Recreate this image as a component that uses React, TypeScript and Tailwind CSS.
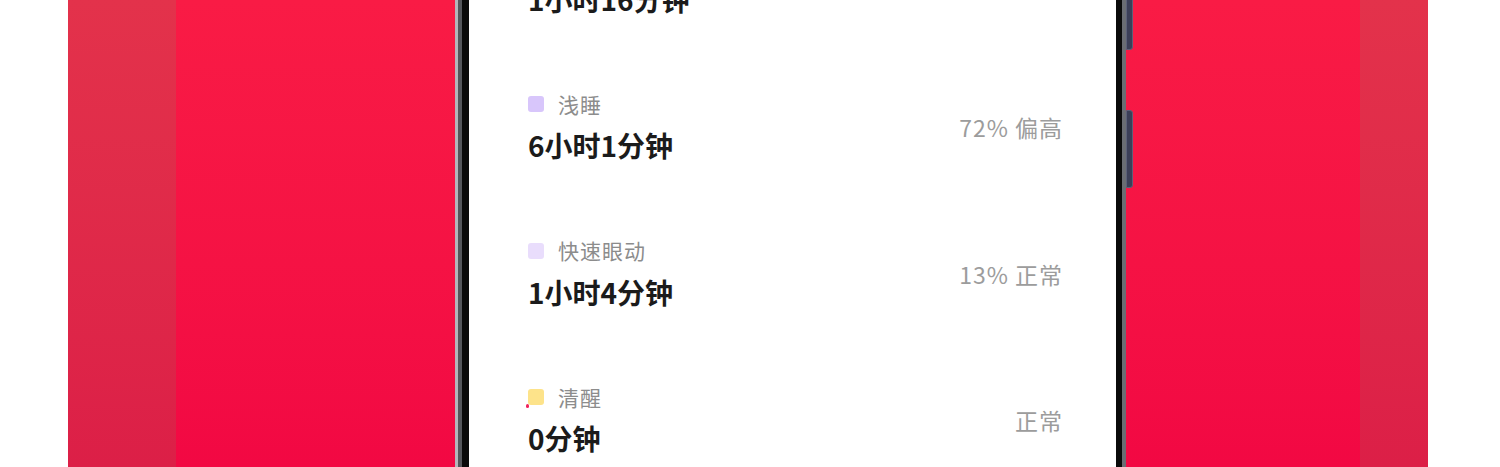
const FONT = { fontFamily: '"Noto Sans CJK SC", "Noto Sans", sans-serif' };

type Stage = {
  label: string;
  value: string;
  note: string;
  dot: string;
  mark?: boolean;
};

const stages: Stage[] = [
  { label: "深睡", value: "1小时16分钟", note: "", dot: "bg-[#b79cf5]" },
  { label: "浅睡", value: "6小时1分钟", note: "72% 偏高", dot: "bg-[#d8c6fb]" },
  { label: "快速眼动", value: "1小时4分钟", note: "13% 正常", dot: "bg-[#e9ddfc]" },
  { label: "清醒", value: "0分钟", note: "正常", dot: "bg-[#fde38a]", mark: true },
];

const StageRow = ({ s }: { s: Stage }) => {
  return (
    <div className="h-[146.5px] shrink-0">
      <div className="flex items-center justify-between">
        <div className="flex flex-col">
          <div className="flex h-[24px] items-center gap-[14px]">
            <div className={`relative h-[16px] w-[16px] rounded-[3px] ${s.dot}`}>
              {s.mark && (
                <div className="absolute -left-[2px] bottom-[-3px] h-[4px] w-[3px] rounded-full bg-[#f0245a]" />
              )}
            </div>
            <span className="text-[21px] leading-none tracking-[1px] text-[#8c8c8c]">{s.label}</span>
          </div>
          <span className="mt-[11px] h-[36px] text-[28px] font-bold leading-[36px] text-[#1b1b1b]">
            {s.value}
          </span>
        </div>
        <span className="text-[23px] leading-none tracking-[1px] text-[#9c9c9c]">{s.note}</span>
      </div>
    </div>
  );
};

const App = () => {
  return (
    <div className="flex h-[467px] w-[1500px] overflow-hidden bg-white" style={FONT}>
      <div className="w-[68px] shrink-0" />
      <div className="flex h-full w-[1360px] shrink-0">
        <div className="h-full w-[108px] shrink-0 bg-gradient-to-b from-[#e3324b] to-[#dc1f47]" />
        <div className="relative flex h-full w-[1184px] shrink-0 bg-gradient-to-b from-[#f91b45] to-[#f20843] pl-[279px]">
          {/* phone */}
          <div className="relative flex h-full w-[671px]">
            <div className="w-[3px] bg-[#b4b6bb]" />
            <div className="w-[4px] bg-[#55575c]" />
            <div className="w-[7px] bg-[#0a0a0a]" />
            <div className="flex h-full w-[647px] flex-col overflow-hidden bg-white pl-[59px] pr-[53px]">
              <div className="-mt-[54.5px] flex flex-col">
                {stages.map((s) => (
                  <StageRow key={s.label} s={s} />
                ))}
              </div>
            </div>
            <div className="w-[6px] bg-[#0a0a0a]" />
            <div className="w-[4px] bg-[#6a6d73]" />
            <div className="absolute -top-[10px] right-[-7px] h-[60px] w-[7px] rounded-r-[3px] border border-[#5b6078] bg-[#3b3f58]" />
            <div className="absolute right-[-7px] top-[110px] h-[78px] w-[7px] rounded-r-[3px] border border-[#5b6078] bg-[#3b3f58]" />
          </div>
        </div>
        <div className="h-full w-[68px] shrink-0 bg-gradient-to-b from-[#e3324b] to-[#dc1f47]" />
      </div>
    </div>
  );
};

export default App;
